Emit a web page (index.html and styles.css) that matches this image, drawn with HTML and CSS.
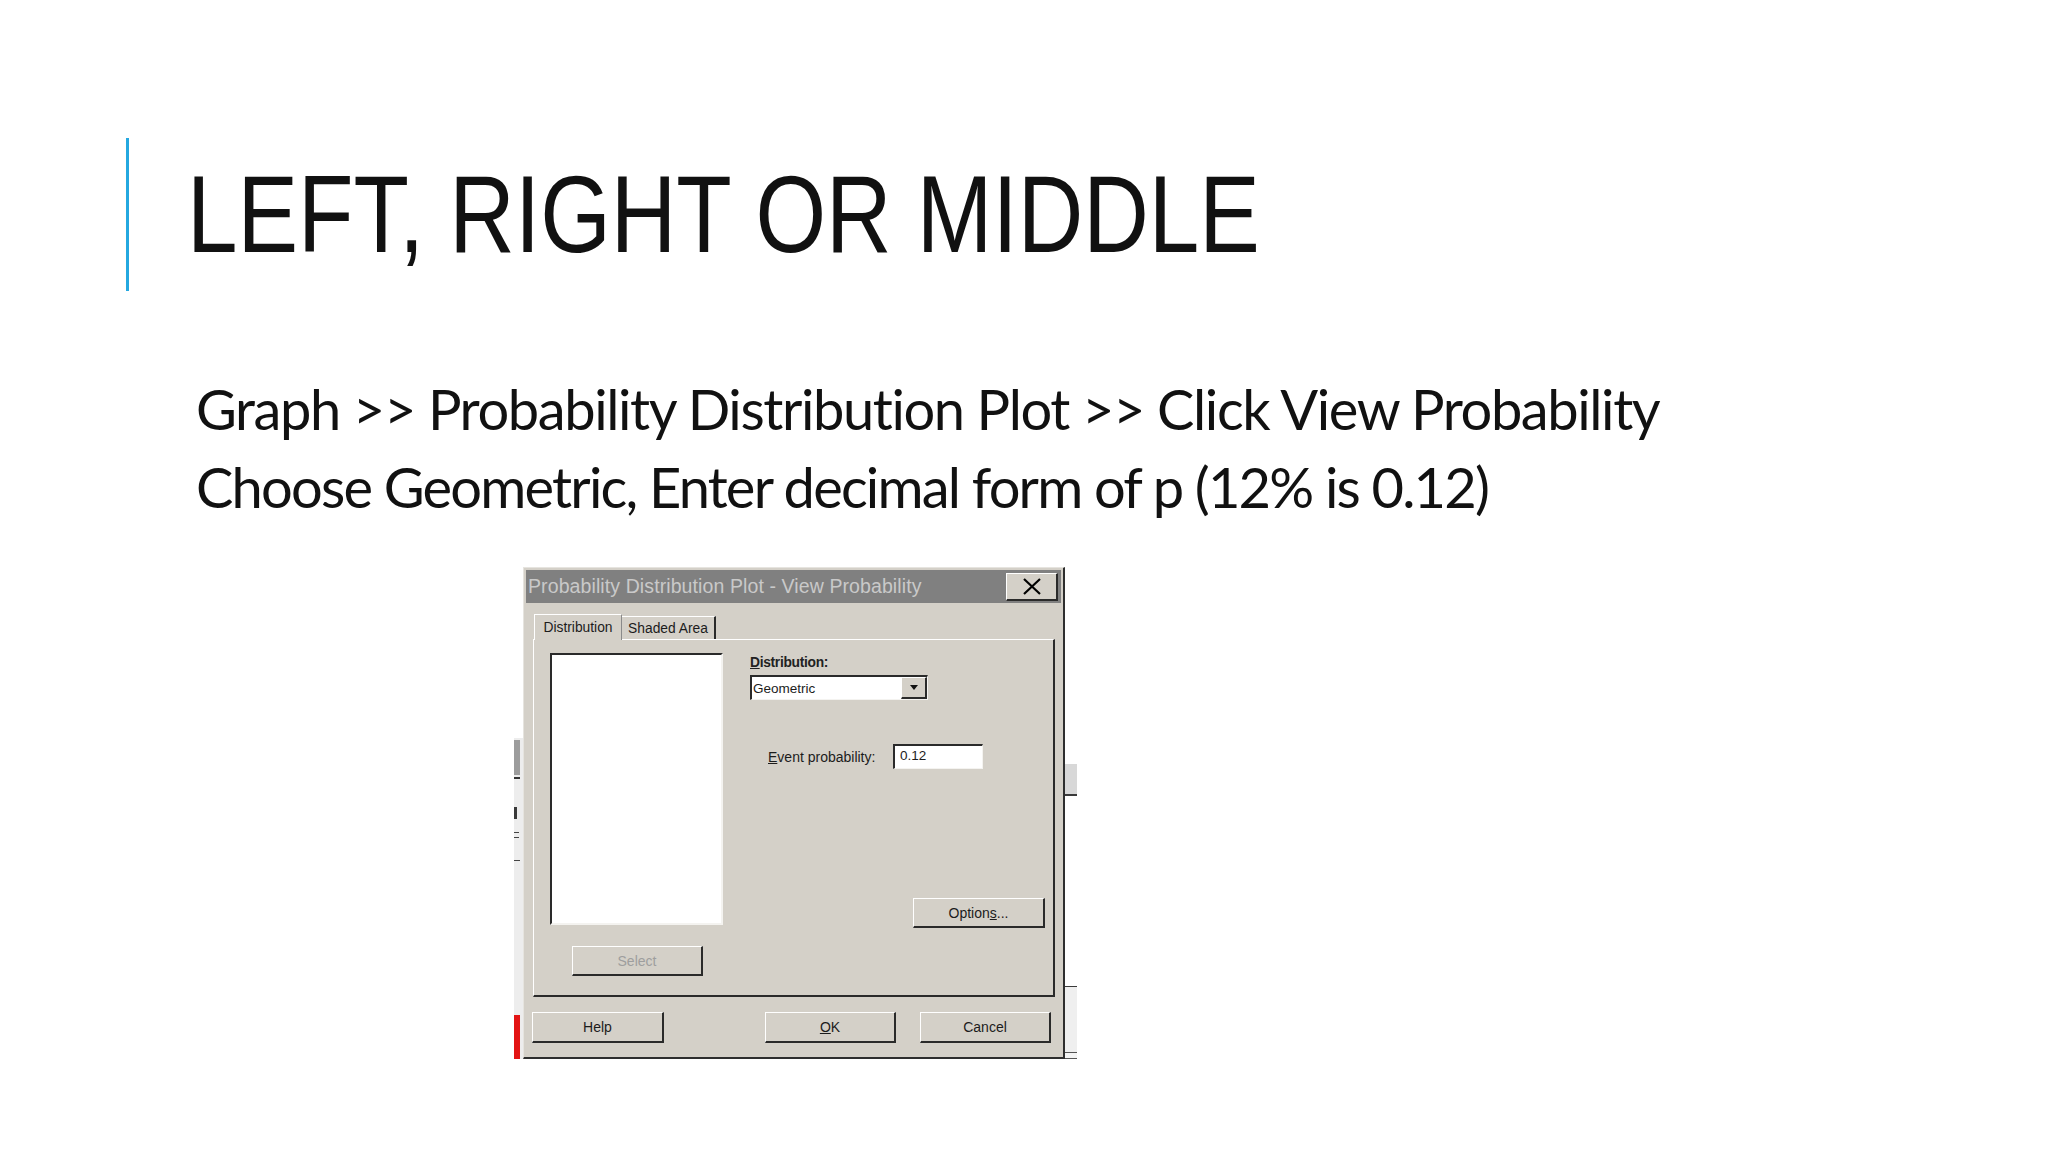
FILE: index.html
```html
<!DOCTYPE html>
<html lang="en">
<head>
<meta charset="utf-8">
<title>Left, Right or Middle</title>
<link rel="stylesheet" href="styles.css">
</head>
<body>
<div class="slide">
  <header class="title-block">
    <h1 class="title">LEFT, RIGHT OR MIDDLE</h1>
  </header>
  <div class="body-text">
    <p class="line">Graph &gt;&gt; Probability Distribution Plot &gt;&gt; Click View Probability</p>
    <p class="line line-tight">Choose Geometric, Enter decimal form of p (12% is 0.12)</p>
  </div>
  <div class="shot">
    <div class="bg-left">
      <div class="bgl-top"></div>
      <div class="bgl-body">
        <div class="bgl-scroll"></div>
        <div class="bgl-rule"></div>
        <div class="bgl-glyph-p"></div>
        <div class="bgl-eq"></div>
        <div class="bgl-eq bgl-eq2"></div>
        <div class="bgl-dash"></div>
        <div class="bgl-fill"></div>
        <div class="bgl-red"></div>
      </div>
    </div>
    <div class="dialog">
      <div class="titlebar">
        <span class="titlebar-text">Probability Distribution Plot - View Probability</span>
        <button class="btn close-btn" type="button" aria-label="Close">
          <svg width="20" height="17" viewBox="0 0 20 17"><path d="M2 1 L18 16 M18 1 L2 16" stroke="#000" stroke-width="2.2" fill="none"/></svg>
        </button>
      </div>
      <div class="tabs">
        <div class="tab tab-active">Distribution</div>
        <div class="tab">Shaded Area</div>
      </div>
      <div class="panel">
        <div class="col-left">
          <div class="listbox"></div>
          <button class="btn btn-select" type="button">Select</button>
        </div>
        <div class="col-right">
          <div class="label"><u>D</u>istribution:</div>
          <div class="combo">
            <span class="combo-text">Geometric</span>
            <span class="combo-btn"><span class="arrow"></span></span>
          </div>
          <div class="event-row">
            <span class="event-label"><u>E</u>vent probability:</span>
            <span class="input">0.12</span>
          </div>
          <button class="btn btn-options" type="button">Option<u>s</u>...</button>
        </div>
      </div>
      <div class="footer">
        <button class="btn btn-foot btn-help" type="button">Help</button>
        <button class="btn btn-foot btn-ok" type="button"><u>O</u>K</button>
        <button class="btn btn-foot btn-cancel" type="button">Cancel</button>
      </div>
    </div>
    <div class="bg-right">
      <div class="bgr-top"></div>
      <div class="bgr-band"></div>
      <div class="bgr-rule"></div>
      <div class="bgr-fill"></div>
      <div class="bgr-low">
        <div class="bgr-low-fill"></div>
        <div class="bgr-low-rule"></div>
        <div class="bgr-low-end"></div>
      </div>
    </div>
  </div>
</div>
</body>
</html>
```

FILE: styles.css
```css
html, body {
  margin: 0;
  padding: 0;
  background: #ffffff;
}

.slide {
  width: 2048px;
  height: 1152px;
  overflow: hidden;
  background: #ffffff;
}

/* ---------- title ---------- */
.title-block {
  margin: 138px 0 0 126px;
  height: 153px;
  border-left: 3px solid #24a8e0;
  padding-left: 58px;
}

.title {
  display: inline-block;
  margin: 0;
  font-family: "Liberation Sans Narrow", "Arial Narrow", "Liberation Sans", sans-serif;
  font-weight: normal;
  font-size: 109px;
  line-height: 153px;
  color: #111111;
  white-space: nowrap;
  transform: scaleX(0.833);
  transform-origin: 0 50%;
}

/* ---------- body text ---------- */
.body-text {
  margin: 79px 0 0 196px;
}

.line {
  margin: 0;
  font-family: Lato, "Open Sans", sans-serif;
  font-size: 56px;
  line-height: 78px;
  letter-spacing: -1.4px;
  color: #111111;
  white-space: nowrap;
}

.line-tight {
  letter-spacing: -1.8px;
}

/* ---------- screenshot ---------- */
.shot {
  display: flex;
  margin: 41px 0 0 514px;
  height: 492px;
}

.bg-left {
  width: 9px;
  display: flex;
  flex-direction: column;
}

.bgl-top {
  height: 171px;
}

.bgl-body {
  flex: 1;
  display: flex;
  flex-direction: column;
  background: #ededed;
}

.bgl-scroll {
  margin-top: 2px;
  width: 6px;
  height: 35px;
  background: #9c9c9c;
}

.bgl-rule {
  margin-top: 2px;
  width: 6px;
  height: 2px;
  background: #333333;
}

.bgl-glyph-p {
  margin-top: 28px;
  width: 3px;
  height: 12px;
  background: #3a3a3a;
}

.bgl-eq {
  margin-top: 13px;
  width: 5px;
  height: 1px;
  background: #444444;
}

.bgl-eq2 {
  margin-top: 4px;
}

.bgl-dash {
  margin-top: 22px;
  width: 6px;
  height: 1px;
  background: #444444;
}

.bgl-fill {
  flex: 1;
}

.bgl-red {
  width: 6px;
  height: 44px;
  background: #e31414;
}

.bg-right {
  width: 12px;
  display: flex;
  flex-direction: column;
}

.bgr-top {
  height: 197px;
}

.bgr-band {
  height: 30px;
  background: #d8d8d8;
}

.bgr-rule {
  height: 2px;
  background: #3a3a3a;
}

.bgr-fill {
  height: 190px;
}

.bgr-low {
  flex: 1;
  display: flex;
  flex-direction: column;
  border-top: 1px solid #3a3a3a;
}

.bgr-low-fill {
  flex: 1;
  background: #efefef;
}

.bgr-low-rule {
  height: 1px;
  background: #555555;
}

.bgr-low-end {
  height: 5px;
  background: #f4f4f4;
  border-bottom: 1px solid #555555;
}

/* ---------- dialog ---------- */
.dialog {
  width: 537px;
  height: 487px;
  box-sizing: content-box;
  background: #d4d0c8;
  border-top: 1px solid #e6e4df;
  border-left: 1px solid #e6e4df;
  border-right: 2px solid #2e2e2e;
  border-bottom: 2px solid #2e2e2e;
  padding: 2px 0 0 2px;
  display: flex;
  flex-direction: column;
  font-family: "Liberation Sans", Arial, sans-serif;
  color: #1c1c1c;
}

.titlebar {
  height: 33px;
  margin-right: 2px;
  background: #808080;
  display: flex;
  align-items: center;
  justify-content: space-between;
  padding: 0 3px 0 2px;
}

.titlebar-text {
  font-size: 19.5px;
  letter-spacing: 0.1px;
  color: #c9c9c9;
  white-space: nowrap;
}

.btn {
  box-sizing: border-box;
  margin: 0;
  padding: 0;
  background: #d4d0c8;
  border-top: 1px solid #ffffff;
  border-left: 1px solid #ffffff;
  border-right: 2px solid #2a2a2a;
  border-bottom: 2px solid #2a2a2a;
  font-family: "Liberation Sans", Arial, sans-serif;
  font-size: 14px;
  color: #1c1c1c;
  display: flex;
  align-items: center;
  justify-content: center;
}

.close-btn {
  width: 52px;
  height: 28px;
}

.tabs {
  display: flex;
  align-items: flex-end;
  margin: 11px 0 0 8px;
  height: 25px;
}

.tab {
  box-sizing: border-box;
  font-size: 13.8px;
  white-space: nowrap;
  display: flex;
  align-items: center;
  justify-content: center;
}

.tab-active {
  width: 88px;
  height: 26px;
  margin-bottom: -1px;
  background: #d4d0c8;
  border-top: 1px solid #ffffff;
  border-left: 1px solid #ffffff;
  border-right: 1px solid #8a8a8a;
  position: relative;
  z-index: 1;
}

.tab:not(.tab-active) {
  width: 94px;
  height: 23px;
  border-top: 1px solid #ffffff;
  border-right: 2px solid #2a2a2a;
}

.panel {
  box-sizing: border-box;
  margin: 0 8px 0 7px;
  height: 358px;
  border-top: 1px solid #ffffff;
  border-left: 1px solid #ffffff;
  border-right: 2px solid #2a2a2a;
  border-bottom: 2px solid #2a2a2a;
  padding: 13px 0 0 16px;
  display: flex;
}

.col-left {
  width: 173px;
  display: flex;
  flex-direction: column;
}

.listbox {
  box-sizing: border-box;
  height: 272px;
  background: #ffffff;
  border-top: 2px solid #2a2a2a;
  border-left: 2px solid #2a2a2a;
  border-right: 2px solid #f4f3f0;
  border-bottom: 2px solid #f4f3f0;
}

.btn-select {
  margin: 21px 0 0 22px;
  width: 131px;
  height: 30px;
  color: #9e9e9e;
}

.col-right {
  margin-left: 27px;
  display: flex;
  flex-direction: column;
}

.label {
  height: 20px;
  line-height: 20px;
  font-size: 13.8px;
  font-weight: bold;
  letter-spacing: -0.3px;
  color: #222222;
  white-space: nowrap;
}

.combo {
  box-sizing: border-box;
  margin-top: 2px;
  width: 178px;
  height: 25px;
  background: #ffffff;
  border-top: 2px solid #2a2a2a;
  border-left: 2px solid #2a2a2a;
  border-right: 1px solid #f4f3f0;
  border-bottom: 1px solid #f4f3f0;
  display: flex;
  align-items: center;
  justify-content: space-between;
}

.combo-text {
  padding-left: 1px;
  font-size: 13.5px;
}

.combo-btn {
  box-sizing: border-box;
  width: 26px;
  height: 22px;
  background: #d4d0c8;
  border-top: 1px solid #ffffff;
  border-left: 1px solid #ffffff;
  border-right: 2px solid #2a2a2a;
  border-bottom: 2px solid #2a2a2a;
  display: flex;
  align-items: center;
  justify-content: center;
}

.arrow {
  width: 0;
  height: 0;
  border-left: 4px solid transparent;
  border-right: 4px solid transparent;
  border-top: 5px solid #111111;
}

.event-row {
  margin-top: 44px;
  display: flex;
  align-items: center;
  height: 25px;
}

.event-label {
  margin-left: 18px;
  width: 125px;
  font-size: 14px;
  white-space: nowrap;
}

.input {
  box-sizing: border-box;
  width: 90px;
  height: 25px;
  background: #ffffff;
  border-top: 2px solid #2a2a2a;
  border-left: 2px solid #2a2a2a;
  border-right: 1px solid #f4f3f0;
  border-bottom: 1px solid #f4f3f0;
  padding-left: 5px;
  font-size: 13.5px;
  line-height: 20px;
}

.btn-options {
  margin: 129px 0 0 163px;
  width: 132px;
  height: 30px;
}

.footer {
  display: flex;
  margin: 15px 0 0 6px;
}

.btn-foot {
  width: 131px;
  height: 31px;
}

.btn-help {
  width: 132px;
}

.btn-ok {
  margin-left: 101px;
}

.btn-cancel {
  margin-left: 24px;
}
```
